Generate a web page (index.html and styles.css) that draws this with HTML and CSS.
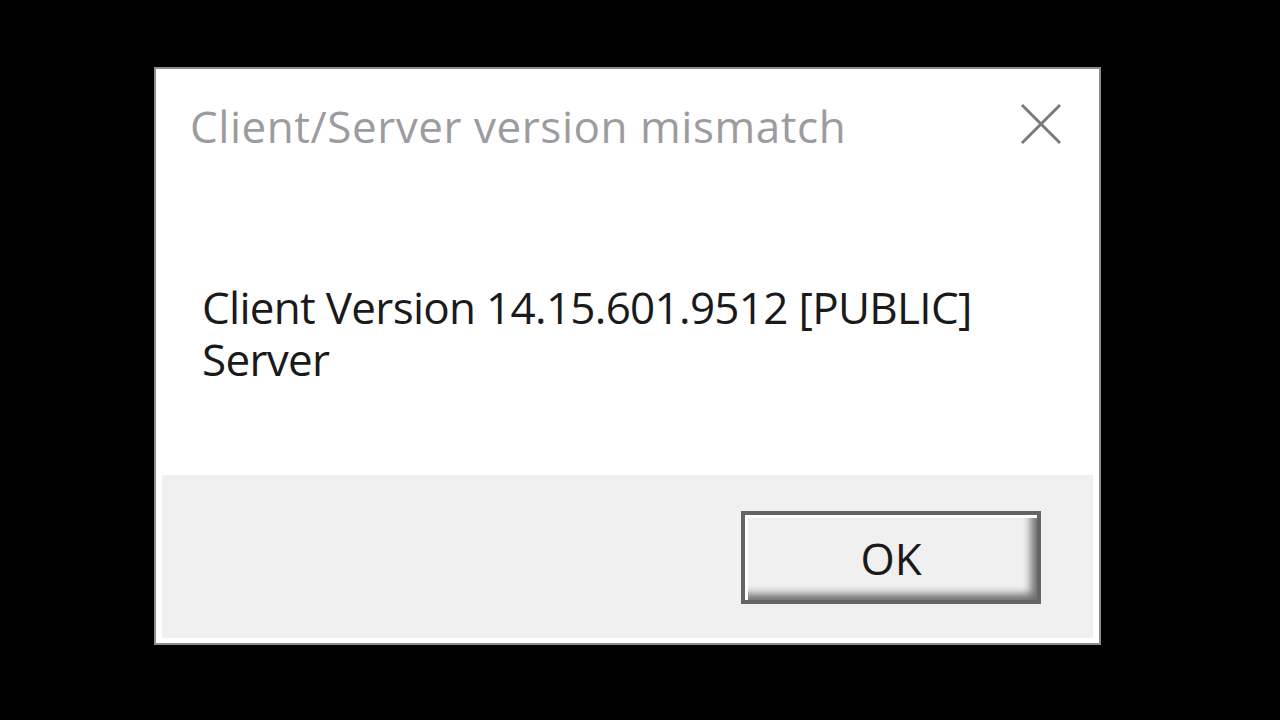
FILE: index.html
```html
<!DOCTYPE html>
<html lang="en">
<head>
<meta charset="utf-8">
<title>Client/Server version mismatch</title>
<link rel="stylesheet" href="styles.css">
</head>
<body>
<div class="dialog">
  <div class="titlebar">
    <div class="title">Client/Server version mismatch</div>
    <div class="close">
      <svg width="42" height="42" viewBox="0 0 42 42"><path d="M2 2 L40 40 M40 2 L2 40" stroke="#7a7a7a" stroke-width="3" fill="none"/></svg>
    </div>
  </div>
  <div class="content">
    <div class="message">Client Version 14.15.601.9512 [PUBLIC]<br>Server</div>
  </div>
  <div class="footer">
    <button class="btn">OK</button>
  </div>
</div>
</body>
</html>
```

FILE: styles.css
```css
html, body {
  margin: 0;
  padding: 0;
  background: #000;
  height: 100%;
}
body {
  padding: 67px 0 0 154px;
  box-sizing: border-box;
  font-family: "Open Sans", "Noto Sans", sans-serif;
}
.dialog {
  width: 947px;
  height: 578px;
  box-sizing: border-box;
  background: #fff;
  border: 2px solid #8c8c8c;
  padding: 0 6px 5px 6px;
  display: flex;
  flex-direction: column;
}
.titlebar {
  height: 120px;
  display: flex;
  align-items: flex-start;
  justify-content: space-between;
  padding: 29px 31px 0 28px;
  box-sizing: border-box;
}
.title {
  font-size: 44px;
  letter-spacing: 0.55px;
  color: #9c9c9f;
  line-height: 56px;
}
.close {
  margin-top: 5px;
  width: 42px;
  height: 42px;
}
.content {
  flex: 1;
  padding: 92px 0 0 40px;
  box-sizing: border-box;
}
.message {
  font-size: 44px;
  letter-spacing: -0.7px;
  color: #1a1a1a;
  line-height: 52px;
}
.footer {
  height: 163px;
  background: #f0f0f0;
  display: flex;
  justify-content: flex-end;
  align-items: flex-start;
  padding: 36px 52px 0 0;
  box-sizing: border-box;
}
.btn {
  width: 300px;
  height: 93px;
  box-sizing: border-box;
  background: #f0f0f0;
  border: 4px solid #646464;
  box-shadow: inset 3px 3px 0 #fff, inset -11px -11px 8px -5px #6e6e6e;
  font-family: inherit;
  font-size: 44px;
  color: #1a1a1a;
  padding: 0;
}
```
